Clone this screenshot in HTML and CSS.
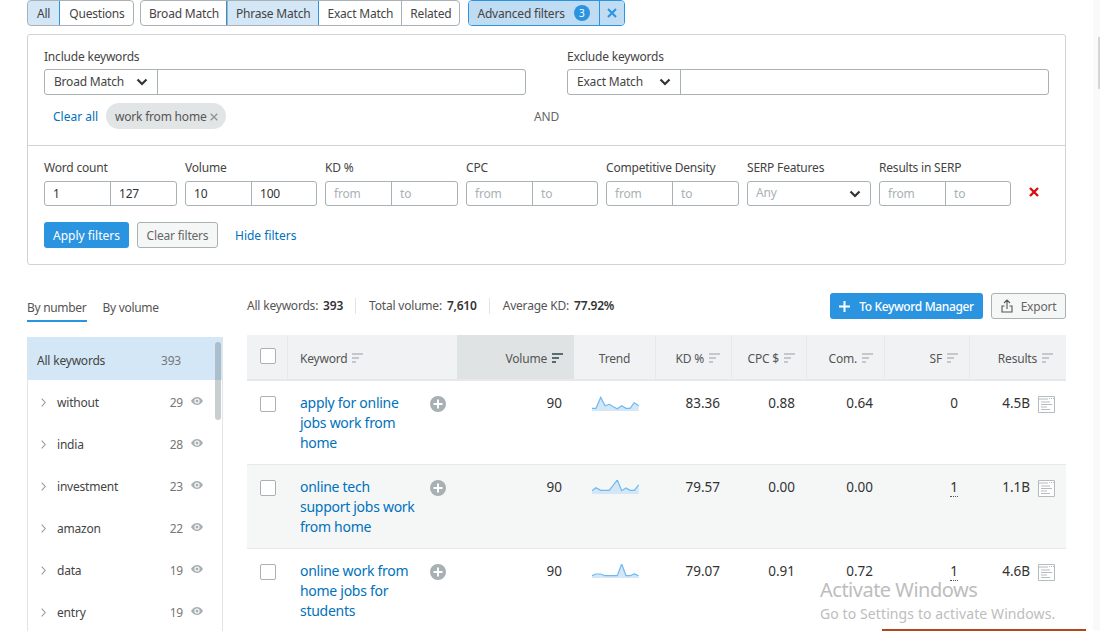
FILE: index.html
```html
<!DOCTYPE html>
<html lang="en">
<head>
<meta charset="utf-8">
<title>Keyword Magic Tool</title>
<link rel="stylesheet" href="styles.css">
</head>
<body>
<svg class="defs" width="0" height="0">
  <symbol id="sort" viewBox="0 0 11 10"><path d="M0 0h11v2H0zM0 4h7v2H0zM0 8h4v2H0z"/></symbol>
  <symbol id="chev" viewBox="0 0 12 8"><path d="M1.5 1.5 6 6l4.500-4.500" fill="none" stroke="currentColor" stroke-width="2.200"/></symbol>
  <symbol id="eye" viewBox="0 0 12 8"><path d="M0 4c3-5.200 9-5.200 12 0-3 5.200-9 5.200-12 0z"/><circle cx="6" cy="4" r="2.600" fill="#fff"/><circle cx="6" cy="4" r="1.500"/></symbol>
  <symbol id="arrow" viewBox="0 0 5 9"><path d="M.7.7 4.200 4.500.7 8.300" fill="none" stroke="currentColor" stroke-width="1.100"/></symbol>
  <symbol id="plus" viewBox="0 0 16 16"><circle cx="8" cy="8" r="8" fill="#a8b0b3"/><path d="M7 3.500h2V7h3.500v2H9v3.500H7V9H3.500V7H7z" fill="#fff"/></symbol>
  <symbol id="serp" viewBox="0 0 17 17"><path d="M.5.500h16v16H.5z" fill="#fff" stroke="#b5bcbf"/><path d="M1 3h9M11 2.500h1M13 2.500h1M15 2.500h1M3 6h9M3 8.500h11M3 11h6M3 13.500h9" fill="none" stroke="#b5bcbf"/></symbol>
</svg>

<div class="page">
  <div class="toolbar">
    <div class="seg seg-type">
      <span class="seg-btn is-on">All</span><span class="seg-btn">Questions</span>
    </div>
    <div class="seg">
      <span class="seg-btn">Broad Match</span><span class="seg-btn is-on">Phrase Match</span><span class="seg-btn">Exact Match</span><span class="seg-btn">Related</span>
    </div>
    <div class="seg seg-adv">
      <span class="seg-btn adv-main">Advanced filters <b class="badge">3</b></span><span class="seg-btn adv-x"><svg width="10" height="10" viewBox="0 0 10 10"><path d="M1 1l8 8M9 1 1 9" fill="none" stroke="#2b94e1" stroke-width="2"/></svg></span>
    </div>
  </div>

  <section class="card">
    <div class="card-top">
      <div class="kw-group">
        <div class="kw-col">
          <label class="lbl">Include keywords</label>
          <div class="field"><span class="match m-inc">Broad Match <svg class="chev" width="12" height="8"><use href="#chev"/></svg></span></div>
        </div>
        <div class="kw-col">
          <label class="lbl">Exclude keywords</label>
          <div class="field"><span class="match">Exact Match <svg class="chev" width="12" height="8"><use href="#chev"/></svg></span></div>
        </div>
      </div>
      <div class="chips">
        <a class="link clear">Clear all</a>
        <span class="chip">work from home <svg class="chip-x" width="8" height="8" viewBox="0 0 8 8"><path d="M.7.7l6.600 6.600M7.300.7.7 7.300" fill="none" stroke="#8b9396" stroke-width="1.300"/></svg></span>
        <span class="and">AND</span>
      </div>
    </div>
    <div class="card-bottom">
      <div class="ranges">
        <div class="rng w133"><label class="lbl">Word count</label><div class="pair"><span class="val">1</span><span class="val">127</span></div></div>
        <div class="rng w132"><label class="lbl">Volume</label><div class="pair"><span class="val">10</span><span class="val">100</span></div></div>
        <div class="rng w133"><label class="lbl">KD %</label><div class="pair ph"><span class="val">from</span><span class="val">to</span></div></div>
        <div class="rng w132"><label class="lbl">CPC</label><div class="pair ph"><span class="val">from</span><span class="val">to</span></div></div>
        <div class="rng w133"><label class="lbl">Competitive Density</label><div class="pair ph"><span class="val">from</span><span class="val">to</span></div></div>
        <div class="rng w124"><label class="lbl">SERP Features</label><div class="pair ph sel"><span class="any">Any</span><svg class="chev" width="12" height="8"><use href="#chev"/></svg></div></div>
        <div class="rng w132"><label class="lbl">Results in SERP</label><div class="pair ph"><span class="val">from</span><span class="val">to</span></div></div>
        <svg class="del" width="10" height="10" viewBox="0 0 10 10"><path d="M1 1l8 8M9 1 1 9" fill="none" stroke="#d90f0f" stroke-width="2.400"/></svg>
      </div>
      <div class="actions">
        <span class="btn btn-blue">Apply filters</span>
        <span class="btn btn-grey">Clear filters</span>
        <a class="link hide">Hide filters</a>
      </div>
    </div>
  </section>

  <div class="work">
    <aside class="side">
      <div class="tabs"><span class="tab is-on">By number</span><span class="tab">By volume</span></div>
      <div class="list">
        <div class="all-row"><span>All keywords</span><span class="all-n">393</span></div>
        <div class="li"><svg class="arr" width="5" height="9"><use href="#arrow"/></svg><span class="li-t">without</span><span class="li-n">29</span><svg class="eye" width="12" height="8"><use href="#eye"/></svg></div>
        <div class="li"><svg class="arr" width="5" height="9"><use href="#arrow"/></svg><span class="li-t">india</span><span class="li-n">28</span><svg class="eye" width="12" height="8"><use href="#eye"/></svg></div>
        <div class="li"><svg class="arr" width="5" height="9"><use href="#arrow"/></svg><span class="li-t">investment</span><span class="li-n">23</span><svg class="eye" width="12" height="8"><use href="#eye"/></svg></div>
        <div class="li"><svg class="arr" width="5" height="9"><use href="#arrow"/></svg><span class="li-t">amazon</span><span class="li-n">22</span><svg class="eye" width="12" height="8"><use href="#eye"/></svg></div>
        <div class="li"><svg class="arr" width="5" height="9"><use href="#arrow"/></svg><span class="li-t">data</span><span class="li-n">19</span><svg class="eye" width="12" height="8"><use href="#eye"/></svg></div>
        <div class="li"><svg class="arr" width="5" height="9"><use href="#arrow"/></svg><span class="li-t">entry</span><span class="li-n">19</span><svg class="eye" width="12" height="8"><use href="#eye"/></svg></div>
        <div class="list-thumb"></div>
      </div>
    </aside>

    <main class="main">
      <div class="stats">
        <span class="stat">All keywords: <b>393</b></span>
        <span class="stat">Total volume: <b>7,610</b></span>
        <span class="stat">Average KD: <b>77.92%</b></span>
        <span class="btn btn-blue btn-mgr"><svg width="11" height="11" viewBox="0 0 11 11"><path d="M4.500 0h2v4.500H11v2H6.500V11h-2V6.500H0v-2h4.500z" fill="#fff"/></svg>To Keyword Manager</span>
        <span class="btn btn-grey btn-exp"><svg width="12" height="14" viewBox="0 0 12 14"><path d="M6 10V1M3 4l3-3 3 3M3.500 7H1v6h10V7H8.500" fill="none" stroke="#555" stroke-width="1.100"/></svg>Export</span>
      </div>

      <div class="tbl">
        <div class="row head">
          <div class="c c-check"><span class="box"></span></div>
          <div class="c c-kw">Keyword <svg class="sort" width="11" height="10"><use href="#sort"/></svg></div>
          <div class="c c-r c-vol">Volume <svg class="sort dark" width="11" height="10"><use href="#sort"/></svg></div>
          <div class="c c-center">Trend</div>
          <div class="c c-r">KD % <svg class="sort" width="11" height="10"><use href="#sort"/></svg></div>
          <div class="c c-r">CPC $ <svg class="sort" width="11" height="10"><use href="#sort"/></svg></div>
          <div class="c c-r">Com. <svg class="sort" width="11" height="10"><use href="#sort"/></svg></div>
          <div class="c c-r">SF <svg class="sort" width="11" height="10"><use href="#sort"/></svg></div>
          <div class="c c-r">Results <svg class="sort" width="11" height="10"><use href="#sort"/></svg></div>
        </div>

        <div class="row">
          <div class="d d-check"><span class="box"></span></div>
          <div class="d d-kw"><a class="kw">apply for online jobs work from home</a><svg class="add" width="16" height="16"><use href="#plus"/></svg></div>
          <div class="d d-r pr12">90</div>
          <div class="d d-trend"><svg class="spark" width="47" height="16" viewBox="0 0 47 16"><path class="sf" d="M0 12.300H4L8.700 1.300 13 9.700 17.300 8.300 21.300 10.700 25.300 12.700 29.700 9.700 34 12.300H38L42.300 6.700 46.700 9.700V15H0z"/><path class="sl" d="M0 12.300H4L8.700 1.300 13 9.700 17.300 8.300 21.300 10.700 25.300 12.700 29.700 9.700 34 12.300H38L42.300 6.700 46.700 9.700"/></svg></div>
          <div class="d d-r pr12">83.36</div>
          <div class="d d-r pr12">0.88</div>
          <div class="d d-r pr12">0.64</div>
          <div class="d d-r pr12">0</div>
          <div class="d d-r d-res">4.5B <svg class="serp" width="17" height="17"><use href="#serp"/></svg></div>
        </div>

        <div class="row alt">
          <div class="d d-check"><span class="box"></span></div>
          <div class="d d-kw"><a class="kw">online tech support jobs work from home</a><svg class="add" width="16" height="16"><use href="#plus"/></svg></div>
          <div class="d d-r pr12">90</div>
          <div class="d d-trend"><svg class="spark" width="47" height="16" viewBox="0 0 47 16"><path class="sf" d="M0 10.700 4 7.700 8.700 10.300H17.300L25.300 0 29.700 10.700 34 8 38 10.300H42.300L46.700 5V14H0z"/><path class="sl" d="M0 10.700 4 7.700 8.700 10.300H17.300L25.300 0 29.700 10.700 34 8 38 10.300H42.300L46.700 5"/></svg></div>
          <div class="d d-r pr12">79.57</div>
          <div class="d d-r pr12">0.00</div>
          <div class="d d-r pr12">0.00</div>
          <div class="d d-r pr12"><span class="dot">1</span></div>
          <div class="d d-r d-res">1.1B <svg class="serp" width="17" height="17"><use href="#serp"/></svg></div>
        </div>

        <div class="row">
          <div class="d d-check"><span class="box"></span></div>
          <div class="d d-kw"><a class="kw">online work from home jobs for students</a><svg class="add" width="16" height="16"><use href="#plus"/></svg></div>
          <div class="d d-r pr12">90</div>
          <div class="d d-trend"><svg class="spark" width="47" height="16" viewBox="0 0 47 16"><path class="sf" d="M0 11.700 4 10H8.700L13 11.700H25.300L29.700 0 34 11.700H38L42.300 10 46.700 11.700V14H0z"/><path class="sl" d="M0 11.700 4 10H8.700L13 11.700H25.300L29.700 0 34 11.700H38L42.300 10 46.700 11.700"/></svg></div>
          <div class="d d-r pr12">79.07</div>
          <div class="d d-r pr12">0.91</div>
          <div class="d d-r pr12">0.72</div>
          <div class="d d-r pr12"><span class="dot">1</span></div>
          <div class="d d-r d-res">4.6B <svg class="serp" width="17" height="17"><use href="#serp"/></svg></div>
        </div>
      </div>
    </main>
  </div>
</div>

<div class="win-scroll"><div class="win-thumb"></div></div>
<div class="watermark"><div class="wm-a">Activate Windows</div><div class="wm-b">Go to Settings to activate Windows.</div></div>
<div class="taskbar-peek"></div>
</body>
</html>
```
FILE: styles.css
```css
* { box-sizing: border-box; }
html, body { margin: 0; height: 631px; overflow: hidden; background: #fff; }
body { font-family: "Noto Sans", "Open Sans", sans-serif; font-size: 12px; letter-spacing: -0.2px; color: #333; position: relative; }
.defs { position: absolute; }
b { font-weight: 600; }

.page { width: 1066px; padding-left: 27px; }

.toolbar { display: flex; height: 26px; gap: 6px; }
.seg { display: flex; border: 1px solid #a9b1b4; border-radius: 4px; overflow: hidden; }
.seg-type { width: 107px; }
.seg-adv { margin-left: 2px; border-color: #2b94e1; }
.seg-btn { display: flex; align-items: center; padding: 0 8px; border-left: 1px solid #a9b1b4; white-space: nowrap; color: #444; }
.seg-type .seg-btn { padding: 0 9px; }
.seg-btn:first-child { border-left: 0; }
.seg-btn.is-on { background: #d3e7f6; box-shadow: 0 0 0 1px #2b94e1; position: relative; }
.seg-adv .seg-btn { background: #bfdcf3; }
.adv-main { width: 130px; gap: 9px; padding-left: 8px; }
.adv-x { width: 25px; justify-content: center; border-left-color: #2b94e1 !important; padding: 0; }
.badge { width: 16px; height: 16px; border-radius: 50%; background: #2b94e1; color: #fff; font-size: 10px; font-weight: 400; display: flex; align-items: center; justify-content: center; }

.card { margin-top: 8px; height: 231px; border: 1px solid #d0d3d4; border-radius: 3px; }
.card-top { height: 111px; padding: 14px 16px 0; border-bottom: 1px solid #d0d3d4; }
.kw-group { display: flex; gap: 41px; }
.kw-col { width: 482px; }
.lbl { display: block; height: 20px; line-height: 15px; white-space: nowrap; color: #444; }
.field { height: 26px; border: 1px solid #a9b1b4; border-radius: 3px; display: flex; }
.match { width: 113px; padding: 0 9px 2px; display: flex; align-items: center; justify-content: space-between; border-right: 1px solid #a9b1b4; color: #444; }
.chev { color: #333; flex: none; margin-top: 2px; }
.chips { display: flex; align-items: center; height: 26px; margin-top: 8px; }
.link { color: #0071bc; letter-spacing: 0; }
.clear { margin-left: 9px; width: 53px; white-space: nowrap; }
.chip { width: 120px; height: 26px; border-radius: 13px; background: #e2e5e6; color: #555; display: flex; align-items: center; padding-left: 9px; white-space: nowrap; gap: 3px; }
.chip-x { flex: none; margin-top: 1px; }
.and { margin-left: 308px; color: #666; }

.card-bottom { padding: 14px 16px 0; }
.ranges { display: flex; gap: 8px; position: relative; }
.w133 { width: 133px; } .w132 { width: 132px; } .w124 { width: 124px; }
.rng .lbl { height: 21px; line-height: 16px; }
.pair { height: 25px; border: 1px solid #a9b1b4; border-radius: 3px; display: grid; grid-template-columns: 65px 1fr; }
.val { padding-left: 8px; line-height: 23px; color: #333; }
.val + .val { border-left: 1px solid #a9b1b4; }
.ph .val, .any { color: #a9b1b4; }
.sel { display: flex; justify-content: space-between; align-items: center; padding: 0 9px 0 8px; }
.sel .any { margin-top: -2px; }
.sel .chev { margin-top: 0; }
.del { margin: 27px 0 0 10px; flex: none; }
.actions { display: flex; align-items: center; gap: 8px; margin-top: 16px; }
.btn { display: inline-flex; align-items: center; justify-content: center; height: 26px; border-radius: 3px; white-space: nowrap; }
.btn-blue { background: #2b94e1; color: #fff; width: 85px; letter-spacing: 0; }
.btn-grey { background: #f5f7f7; border: 1px solid #a9b1b4; color: #666; width: 81px; }
.hide { margin-left: 9px; }

.work { display: flex; gap: 24px; margin-top: 28px; }
.side { width: 196px; flex: none; }
.tabs { display: flex; gap: 16px; height: 29px; letter-spacing: -0.3px; }
.tab { height: 29px; padding-top: 6px; color: #555; white-space: nowrap; }
.tab.is-on { border-bottom: 2px solid #2b94e1; }
.list { position: relative; margin-top: 15px; height: 294px; border: solid #e2e5e6; border-width: 0 1px; overflow: hidden; }
.all-row { height: 43px; background: #d3e7f6; display: flex; align-items: center; justify-content: space-between; padding: 3px 41px 0 9px; color: #444; }
.all-n { color: #777; }
.li { height: 42px; display: flex; align-items: center; padding: 2px 0 0 13px; }
.arr { color: #999; flex: none; margin-right: 11px; }
.li-t { width: 96px; color: #444; white-space: nowrap; }
.li-n { width: 30px; text-align: right; color: #777; }
.eye { margin: -2px 0 0 8px; fill: #a8b0b3; flex: none; }
.list-thumb { position: absolute; left: 187px; top: 5px; width: 6px; height: 78px; border-radius: 3px; background: rgba(90, 105, 115, 0.33); }

.main { width: 819px; flex: none; }
.stats { display: flex; align-items: center; height: 26px; }
.stat { padding-right: 12px; margin-right: 13px; border-right: 1px solid #e2e5e6; height: 16px; line-height: 16px; color: #555; white-space: nowrap; }
.stat b { color: #333; margin-left: 2px; }
.stat:nth-child(3) { border-right: 0; margin-right: 0; padding-right: 0; }
.btn-mgr { width: 153px; margin-left: auto; gap: 9px; font-weight: 500; letter-spacing: -0.35px; }
.btn-exp { width: 75px; margin-left: 8px; gap: 8px; }

.tbl { margin-top: 16px; }
.row { display: grid; grid-template-columns: 41px 169px 117px 82px 76px 75px 78px 85px 96px; height: 84px; border-bottom: 1px solid #e6e8ea; }
.row.alt { background: #f5f7f7; }
.head { height: 46px; background: #f0f2f4; border-bottom: 2px solid #e6e8ea; color: #555; }
.c { display: flex; align-items: center; gap: 5px; padding-top: 2px; border-right: 1px solid #e6e8ea; white-space: nowrap; }
.c:last-child { border-right: 0; padding-right: 13px; }
.c-kw { padding-left: 12px; border-right: 0; }
.c-r { justify-content: flex-end; padding-right: 11px; }
.c-center { justify-content: center; }
.c-vol { background: #dfe3e4; border-right: 0; }
.c-check { padding: 0 0 2px 13px; }
.sort { fill: #c3c8cb; flex: none; }
.sort.dark { fill: #5a6a73; }
.box { display: block; width: 16px; height: 16px; border: 1px solid #a9b1b4; border-radius: 2px; background: #fff; }
.d { padding-top: 12px; font-size: 13.500px; line-height: 20px; letter-spacing: 0; color: #333; }
.d-check { padding: 15px 0 0 13px; }
.d-kw { display: flex; justify-content: space-between; padding-left: 12px; padding-right: 11px; }
.kw { width: 122px; color: #0071bc; font-size: 14px; letter-spacing: -0.28px; }
.add { flex: none; margin-top: 3px; }
.d-r { text-align: right; }
.pr12 { padding-right: 12px; }
.d-trend { padding: 15px 0 0 18px; }
.spark { display: block; }
.sf { fill: #d3e7f6; }
.sl { fill: none; stroke: #6cb9f2; stroke-width: 1.200; }
.d-res { display: flex; justify-content: flex-end; gap: 8px; padding-right: 11px; }
.serp { margin-top: 3px; flex: none; }
.dot { border-bottom: 1px dotted #555; }

.win-scroll { position: absolute; top: 0; right: 0; width: 7px; height: 631px; background: #fafafa; }
.win-thumb { position: absolute; right: 0; top: 37px; width: 2px; height: 52px; background: #d5d5d5; }
.watermark { position: absolute; left: 820px; top: 581px; color: #bdbdbd; white-space: nowrap; letter-spacing: 0; }
.wm-a { font-size: 20px; line-height: 18px; letter-spacing: -0.5px; }
.wm-b { font-size: 14px; line-height: 18px; margin-top: 6px; letter-spacing: 0.1px; }
.taskbar-peek { position: absolute; left: 882px; top: 629px; width: 204px; height: 2px; background: #b5451d; }
```
